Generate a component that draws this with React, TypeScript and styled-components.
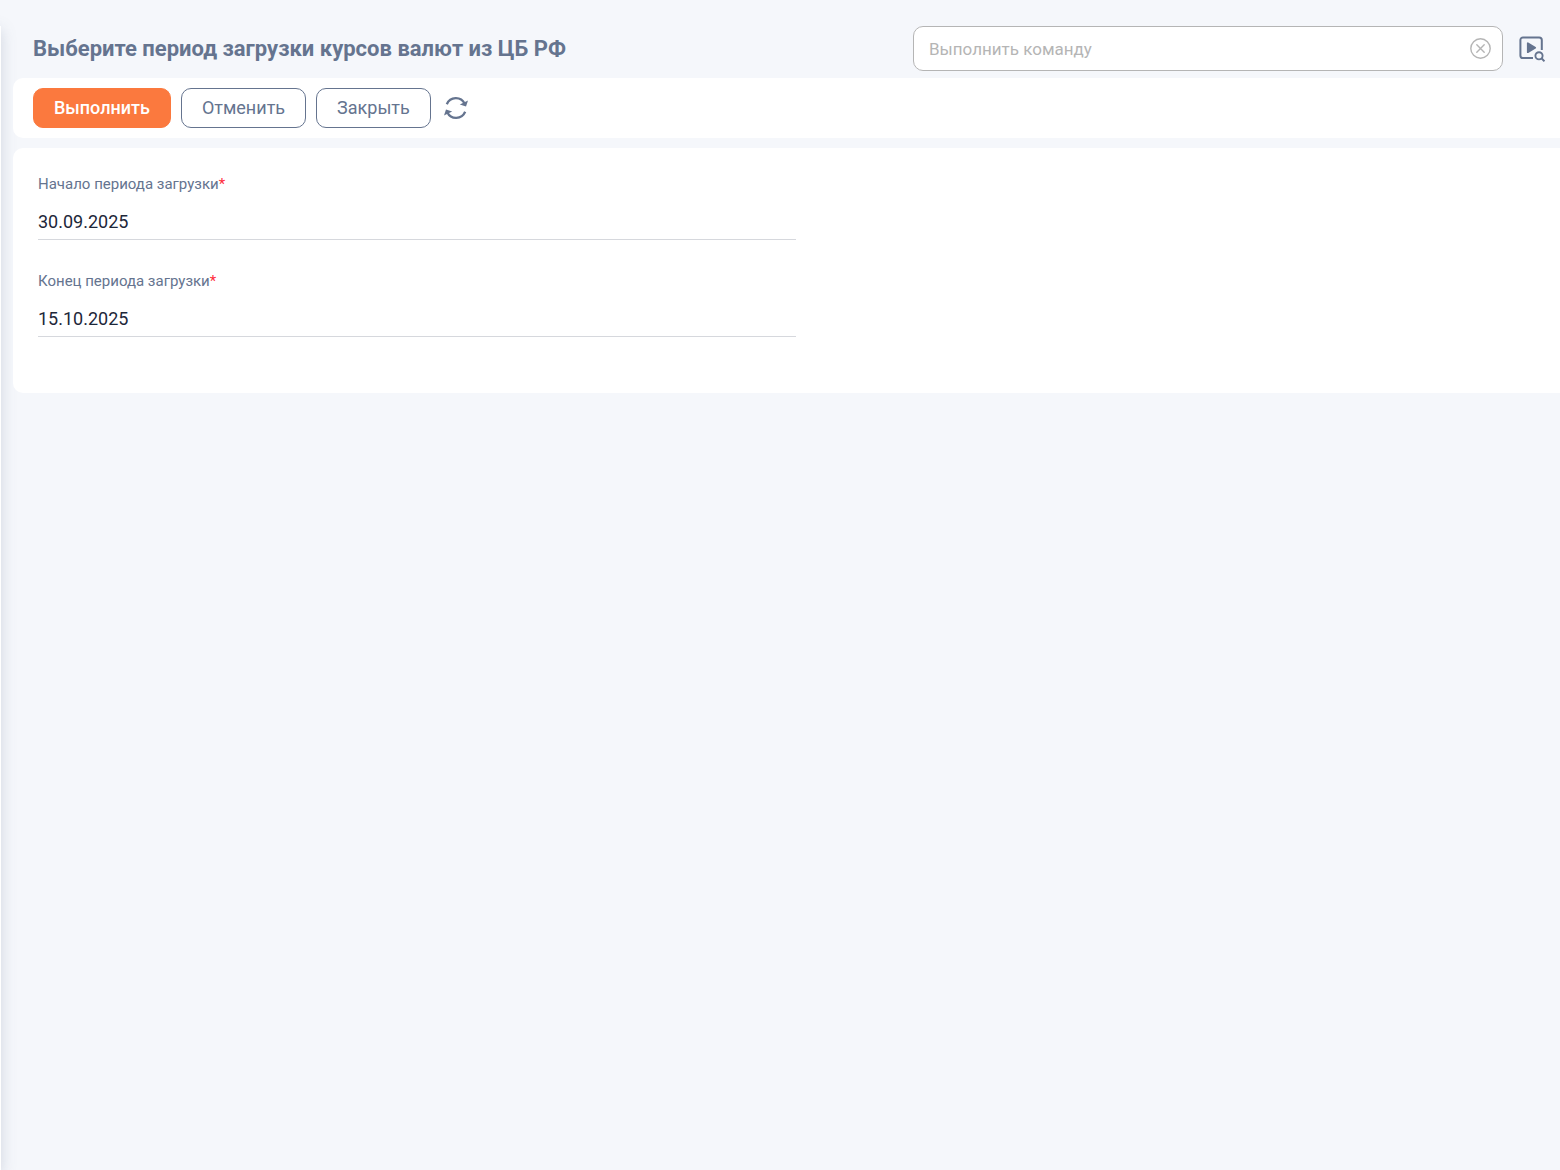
import React, { useState } from "react";
import styled, { createGlobalStyle } from "styled-components";

const color = {
  page: "#f5f7fb",
  surface: "#ffffff",
  slate: "#65748f",
  accent: "#fb793e",
  ink: "#1d2739",
  muted: "#b5b5b5",
  line: "#d6d8dd",
  required: "#ff2d3b",
};

const GlobalStyle = createGlobalStyle`
  *, *::before, *::after { box-sizing: border-box; }
  body {
    margin: 0;
    background: ${color.page};
    color: ${color.slate};
    font-family: Roboto, "Liberation Sans", sans-serif;
  }
  button, input { font: inherit; }
`;

const Layout = styled.div`
  display: flex;
  min-height: 100vh;
  overflow: hidden;
`;

/* Collapsed side menu: only its last pixel and its shadow stay visible. */
const Menu = styled.div`
  flex: 0 0 60px;
  margin: 26px 0 0 -59px;
  background: ${color.surface};
  box-shadow: 0 4px 14px rgba(101, 116, 143, 0.25);
`;

const Main = styled.main`
  flex: 1;
  min-width: 0;
  padding-left: 12px;
`;

const Header = styled.header`
  display: flex;
  align-items: center;
  gap: 16px;
  padding: 26px 15px 7px 20px;
`;

const Title = styled.h1`
  flex: 1;
  margin: 0;
  font-size: 22px;
  line-height: 28px;
  font-weight: 700;
`;

const Search = styled.label`
  display: flex;
  align-items: center;
  flex: 0 1 590px;
  height: 45px;
  padding: 0 11px 0 15px;
  border: 1px solid ${color.muted};
  border-radius: 10px;
  background: ${color.surface};
`;

const SearchInput = styled.input`
  flex: 1;
  min-width: 0;
  padding: 0;
  border: 0;
  outline: 0;
  background: transparent;
  color: ${color.ink};
  font-size: 17px;
  line-height: 24px;
  &::placeholder { color: ${color.muted}; opacity: 1; }
`;

const IconButton = styled.button<{ $tone?: string; $inset?: number }>`
  display: flex;
  padding: 0 ${(p) => p.$inset ?? 0}px;
  border: 0;
  background: transparent;
  color: ${(p) => p.$tone ?? color.slate};
  cursor: pointer;
`;

const Toolbar = styled.div`
  display: flex;
  align-items: center;
  gap: 10px;
  padding: 10px 20px;
  border-radius: 10px 0 0 10px;
  background: ${color.surface};
`;

const Button = styled.button<{ $primary?: boolean }>`
  height: 40px;
  padding: 0 20px;
  border: 1px solid ${(p) => (p.$primary ? color.accent : color.slate)};
  border-radius: 10px;
  background: ${(p) => (p.$primary ? color.accent : color.surface)};
  color: ${(p) => (p.$primary ? color.surface : color.slate)};
  font-size: 18px;
  font-weight: ${(p) => (p.$primary ? 500 : 400)};
  line-height: 24px;
  cursor: pointer;
`;

const Form = styled.form`
  display: grid;
  grid-template-columns: repeat(2, minmax(0, 1fr));
  margin-top: 10px;
  padding: 25px 6px 56px 25px;
  border-radius: 10px 0 0 10px;
  background: ${color.surface};
`;

const Fields = styled.div`
  display: flex;
  flex-direction: column;
  gap: 30px;
`;

const Field = styled.label`
  display: flex;
  flex-direction: column;
  gap: 10px;
`;

const FieldName = styled.span`
  font-size: 15px;
  line-height: 22px;
`;

const Required = styled.span`
  color: ${color.required};
`;

const FieldInput = styled.input`
  width: 100%;
  height: 35px;
  padding: 0 0 2px;
  border: 0;
  border-bottom: 1px solid ${color.line};
  border-radius: 0;
  outline: 0;
  background: transparent;
  color: ${color.ink};
  font-size: 18px;
  line-height: 24px;
`;

const ClearIcon = () => (
  <svg width="21" height="21" viewBox="0 0 21 21" fill="none" stroke="currentColor" strokeWidth="1.4" strokeLinecap="round" aria-hidden="true">
    <circle cx="10.5" cy="10.5" r="9.7" />
    <path d="M6.8 6.8l7.4 7.4M14.2 6.8l-7.4 7.4" />
  </svg>
);

const CommandIcon = () => (
  <svg width="26" height="26" viewBox="0 0 26 26" fill="none" stroke="currentColor" aria-hidden="true">
    <path d="M14 22H4A2.6 2.6 0 0 1 1.4 19.4V4A2.6 2.6 0 0 1 4 1.4H20.2A2.6 2.6 0 0 1 22.8 4V14" strokeWidth="2" />
    <path d="M8.8 7.2v9l7.4-4.5z" fill="currentColor" strokeWidth="1.8" strokeLinejoin="round" />
    <circle cx="20" cy="19.8" r="3.6" strokeWidth="1.9" />
    <path d="M22.5 22.3l3 3" strokeWidth="2" />
  </svg>
);

const RefreshIcon = () => (
  <svg width="24" height="24" viewBox="0 0 24 24" fill="none" stroke="currentColor" strokeWidth="2.3" aria-hidden="true">
    <path d="M2.8 8.2C6.2.4 17 .2 20.6 7.6" />
    <path d="M21.2 15.8C17.8 23.6 7 23.8 3.4 16.4" />
    <path d="M24 4.6l-2 6L15.8 8.4z" fill="currentColor" stroke="none" />
    <path d="M0 19.4l2-6 6.2 2.2z" fill="currentColor" stroke="none" />
  </svg>
);

interface DateFieldProps {
  label: string;
  value: string;
  onChange: (value: string) => void;
}

const DateField = ({ label, value, onChange }: DateFieldProps) => (
  <Field>
    <FieldName>
      {label}
      <Required>*</Required>
    </FieldName>
    <FieldInput type="text" required value={value} onChange={(e) => onChange(e.target.value)} />
  </Field>
);

export default function App() {
  const [command, setCommand] = useState("");
  const [start, setStart] = useState("30.09.2025");
  const [end, setEnd] = useState("15.10.2025");

  return (
    <>
      <GlobalStyle />
      <Layout>
        <Menu />
        <Main>
          <Header>
            <Title>Выберите период загрузки курсов валют из ЦБ РФ</Title>
            <Search>
              <SearchInput
                type="text"
                aria-label="Выполнить команду"
                placeholder="Выполнить команду"
                value={command}
                onChange={(e) => setCommand(e.target.value)}
              />
              <IconButton type="button" $tone={color.muted} aria-label="Очистить" onClick={() => setCommand("")}>
                <ClearIcon />
              </IconButton>
            </Search>
            <IconButton type="button" aria-label="Найти команду">
              <CommandIcon />
            </IconButton>
          </Header>
          <Toolbar>
            <Button type="submit" form="period" $primary>Выполнить</Button>
            <Button type="button">Отменить</Button>
            <Button type="button">Закрыть</Button>
            <IconButton type="button" $inset={3} aria-label="Обновить">
              <RefreshIcon />
            </IconButton>
          </Toolbar>
          <Form id="period" onSubmit={(e) => e.preventDefault()}>
            <Fields>
              <DateField label="Начало периода загрузки" value={start} onChange={setStart} />
              <DateField label="Конец периода загрузки" value={end} onChange={setEnd} />
            </Fields>
          </Form>
        </Main>
      </Layout>
    </>
  );
}
